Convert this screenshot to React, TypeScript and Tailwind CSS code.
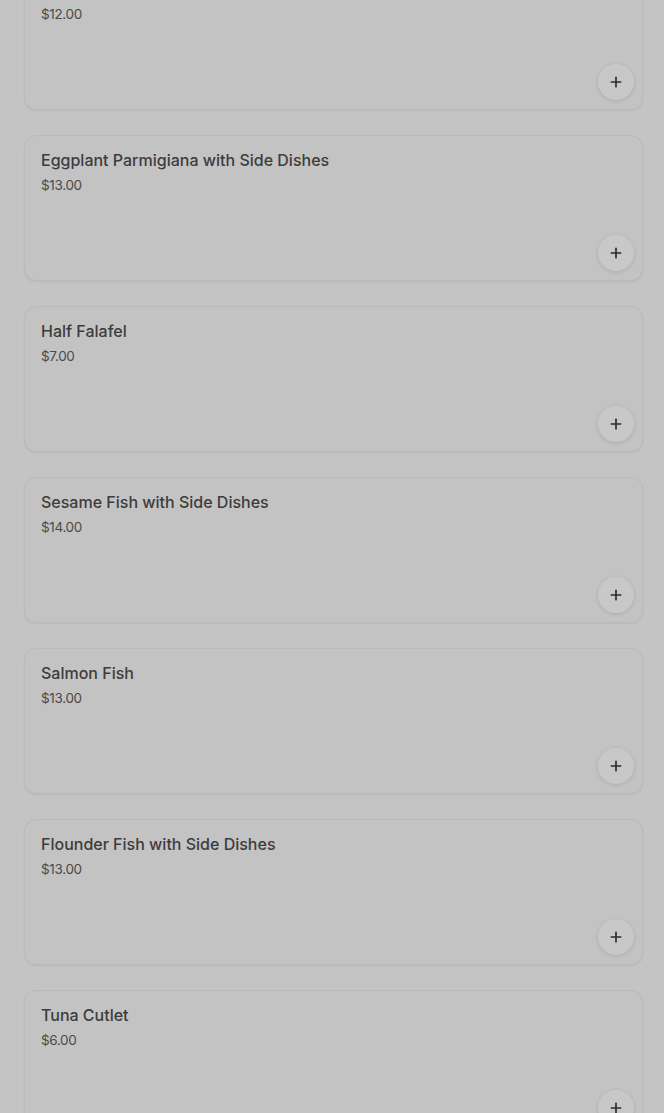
import React from 'react';
import { Plus } from 'lucide-react';

const items = [
  { name: 'Grilled Chicken', price: '$12.00' },
  { name: 'Eggplant Parmigiana with Side Dishes', price: '$13.00' },
  { name: 'Half Falafel', price: '$7.00' },
  { name: 'Sesame Fish with Side Dishes', price: '$14.00' },
  { name: 'Salmon Fish', price: '$13.00' },
  { name: 'Flounder Fish with Side Dishes', price: '$13.00' },
  { name: 'Tuna Cutlet', price: '$6.00' },
];

export default function App() {
  return (
    <div className="h-[1113px] overflow-hidden bg-[#c4c4c4]" style={{ fontFamily: 'Inter, "Noto Sans", sans-serif' }}>
      <div className="-mt-[36px] flex flex-col gap-[25px] pl-6 pr-[21px]">
        {items.map((item, i) => (
          <div
            key={i}
            className="flex h-[146px] flex-col rounded-xl border border-[#bababa] bg-[#c3c3c3] pl-4 pr-2 pt-3 pb-[9px] shadow-[0_1px_2px_rgba(0,0,0,0.06)]"
          >
            <div className="text-[16px] leading-6 font-medium text-[#3c3c3c]">{item.name}</div>
            <div className="mt-[3px] text-[13.5px] leading-5 tracking-tight text-[#4a4a4a]">{item.price}</div>
            <div className="mt-auto flex justify-end">
              <button className="flex h-9 w-9 items-center justify-center rounded-full bg-[#c8c8c8] shadow-[0_1px_4px_rgba(0,0,0,0.12)]">
                <Plus className="h-4 w-4 text-[#2c2c2c]" strokeWidth={2.5} />
              </button>
            </div>
          </div>
        ))}
      </div>
    </div>
  );
}
